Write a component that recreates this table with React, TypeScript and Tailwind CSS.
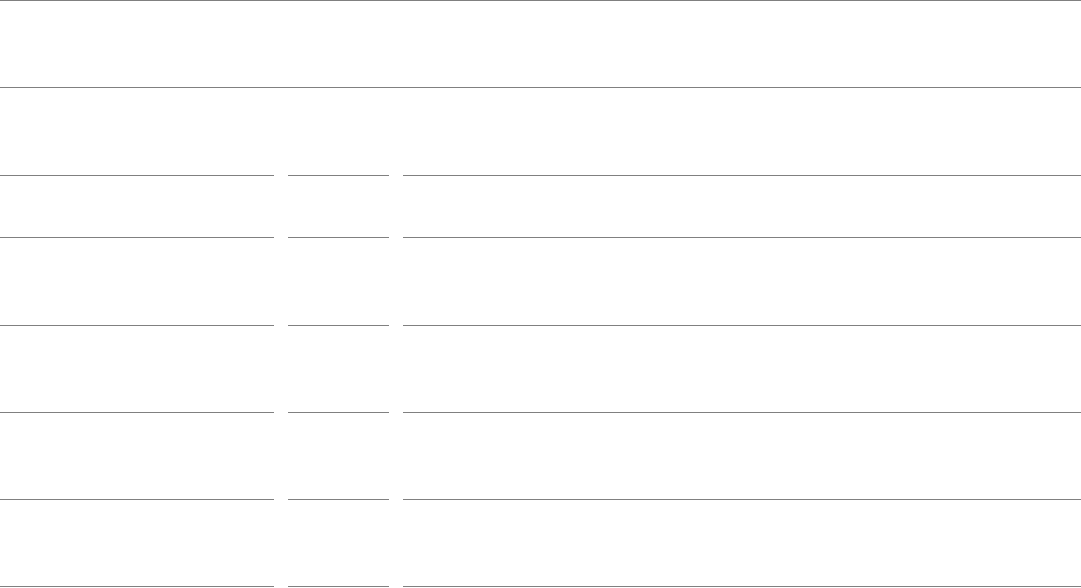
export default function App() {
  const rows = [62, 88, 87, 87, 88]

  return (
    <div className="w-[1081px] h-[588px] bg-white overflow-hidden font-['Liberation_Sans',sans-serif]">
      {/* Header bands */}
      <div className="h-[87px] border-t border-[#808080]" />
      <div className="h-[88px] border-t border-[#808080]" />

      {/* Table-like rows */}
      <div className="grid grid-cols-[274px_101px_1fr] gap-x-[14px]">
        {rows.map((h, i) => (
          <div key={i} className="contents">
            <div className={`border-t border-[#808080] ${i === rows.length - 1 ? "border-b" : ""}`} style={{ height: h }} />
            <div className={`border-t border-[#808080] ${i === rows.length - 1 ? "border-b" : ""}`} style={{ height: h }} />
            <div className={`border-t border-[#808080] ${i === rows.length - 1 ? "border-b" : ""}`} style={{ height: h }} />
          </div>
        ))}
      </div>
    </div>
  )
}
